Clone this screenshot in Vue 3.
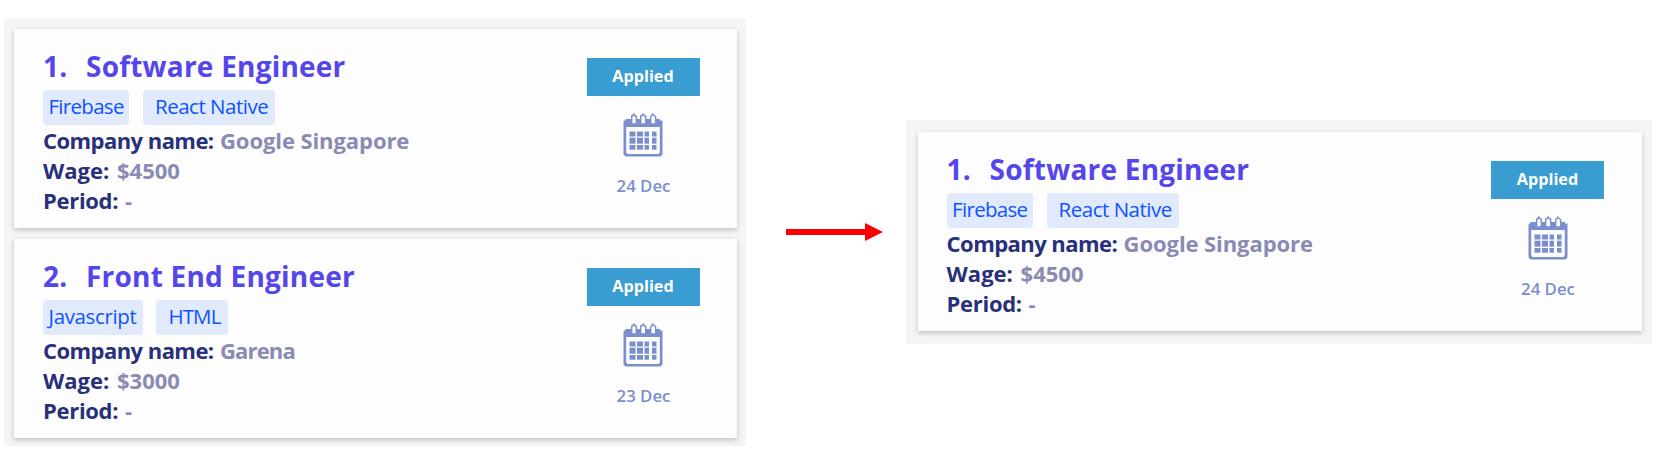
<script setup>
const software = {
  number: '1.', title: 'Software Engineer',
  tags: [{ text: 'Firebase', width: 86.5, spacing: -0.7 }, { text: 'React Native', width: 132, spacing: -0.49 }],
  company: 'Google Singapore', companySpacing: -0.08, wage: '$4500', period: '-', date: '24 Dec',
}
const frontEnd = {
  number: '2.', title: 'Front End Engineer',
  tags: [{ text: 'Javascript', width: 100, spacing: -0.35 }, { text: 'HTML', width: 72, spacing: -0.9 }],
  company: 'Garena', companySpacing: -0.85, wage: '$3000', period: '-', date: '23 Dec',
}
const panels = [
  { name: 'before', jobs: [software, frontEnd] },
  { name: 'after', jobs: [software] },
]
const columns = [{ x: 6.5, w: 6 }, { x: 14, w: 6 }, { x: 21.5, w: 4.5 }, { x: 29, w: 4.5 }]
const rows = [{ y: 18.5, h: 5 }, { y: 24.7, h: 6 }, { y: 32, h: 4.7 }]
</script>

<template>
  <main class="page">
    <template v-for="(panel, p) in panels" :key="panel.name">
      <svg v-if="p === 1" class="arrow" width="97" height="18" viewBox="0 0 97 18">
        <path d="M0 6H79V0L97 9L79 18V12H0Z" fill="#ff0000" />
      </svg>
      <section class="panel" :class="panel.name">
        <article v-for="job in panel.jobs" :key="job.number" class="card">
          <div class="info">
            <h2 class="title"><span class="number">{{ job.number }}</span><span>{{ job.title }}</span></h2>
            <div class="tags">
              <span
                v-for="tag in job.tags"
                :key="tag.text"
                class="tag"
                :style="{ width: tag.width + 'px', letterSpacing: tag.spacing + 'px' }"
              >{{ tag.text }}</span>
            </div>
            <p class="row company"><b>Company name:</b><span :style="{ letterSpacing: job.companySpacing + 'px' }">{{ job.company }}</span></p>
            <p class="row wage"><b>Wage:</b><span>{{ job.wage }}</span></p>
            <p class="row period"><b>Period:</b><span>{{ job.period }}</span></p>
          </div>
          <aside class="status">
            <div class="badge">Applied</div>
            <svg class="calendar" width="40" height="44" viewBox="0 0 40 44">
              <path fill="#7b8fce" fill-rule="evenodd" d="M3 6H37V7.5H39.5V41.5L37.5 43.5H2.5L0.5 41.5V8.5L3 6ZM3.2 14V39.5L4.5 41H35.5L36.8 39.5V14Z" />
              <g fill="#fdfdfd" stroke="#7b8fce" stroke-width="1.4">
                <path d="M8.7 11V3H9.7L10.7 1L12.2 3H13.2V11Z" />
                <path d="M17.7 11V3H18.7L20.2 1L21.7 3H22.7V11Z" />
                <path d="M27.7 11V4L29.7 1L32.7 4V11Z" />
              </g>
              <g fill="#7b8fce">
                <template v-for="row in rows" :key="row.y">
                  <rect v-for="col in columns" :key="col.x" :x="col.x" :y="row.y" :width="col.w" :height="row.h" />
                </template>
              </g>
            </svg>
            <div class="date">{{ job.date }}</div>
          </aside>
        </article>
      </section>
    </template>
  </main>
</template>

<style>
body { background: #fff; }
</style>

<style scoped>
.page {
  box-sizing: border-box;
  width: 1660px;
  height: 461px;
  overflow: hidden;
  display: flex;
  align-items: flex-start;
  padding: 18px 0 0 4px;
  background: #fff;
  font-family: "Open Sans", "Noto Sans", sans-serif;
}
.panel {
  box-sizing: border-box;
  display: flex;
  flex-direction: column;
  gap: 11px;
  background: #f4f5f7;
}
.before { width: 742px; height: 428px; padding: 11px 9px 0 10.4px; }
.after { width: 746px; height: 224px; margin: 102px 0 0 23px; padding: 12.4px 10.5px 0 12px; }
.arrow { flex: none; margin: 205px 0 0 40px; }
.card {
  box-sizing: border-box;
  height: 199px;
  display: flex;
  justify-content: space-between;
  padding: 0 37.5px 0 28.6px;
  background: #fdfdfd;
  box-shadow: 0 2px 5px rgba(0, 0, 0, 0.22);
}
.info { padding-top: 19px; }
.title {
  display: flex;
  margin: 0;
  height: 42px;
  line-height: 36px;
  font-size: 28px;
  font-weight: 700;
  letter-spacing: 0.22px;
  color: #5546eb;
  white-space: nowrap;
}
.number { width: 43px; }
.tags { display: flex; gap: 13.5px; height: 35px; }
.tag {
  height: 35px;
  box-sizing: border-box;
  padding-left: 5.5px;
  border-radius: 4px;
  background: #e0eafc;
  color: #1052ff;
  font-size: 20.5px;
  line-height: 33px;
  white-space: nowrap;
}
.tag + .tag { padding-left: 12px; }
.row {
  display: flex;
  margin: 0;
  height: 30px;
  line-height: 30px;
  font-size: 22px;
  font-weight: 700;
  color: #8a8ab5;
  white-space: nowrap;
}
.row b { color: #28307b; font-weight: 700; }
.company b { width: 177px; letter-spacing: -0.55px; }
.wage b { width: 74px; letter-spacing: 0; }
.period b { width: 82px; letter-spacing: -0.3px; }
.status {
  display: flex;
  flex-direction: column;
  align-items: center;
  padding-top: 28.5px;
  width: 113px;
}
.badge {
  width: 113px;
  height: 38px;
  line-height: 37px;
  text-align: center;
  font-size: 16.2px;
  font-weight: 700;
  color: #fff;
  background: #399dd2;
}
.calendar { margin-top: 17px; display: block; }
.date {
  margin-top: 17px;
  padding-left: 1px;
  line-height: 24px;
  font-size: 16.8px;
  font-weight: 600;
  color: #7b8fce;
}
</style>
